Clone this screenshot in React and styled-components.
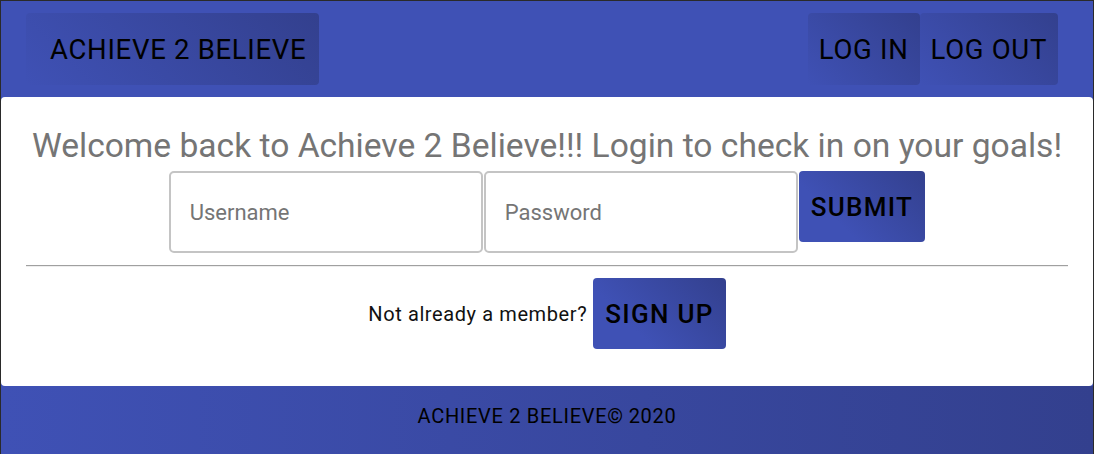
import React from 'react';
import styled, { createGlobalStyle } from 'styled-components';

const GlobalStyle = createGlobalStyle`
  html, body {
    margin: 0;
    padding: 0;
    background: #2a2a2a;
    font-family: Roboto, "Liberation Sans", Arial, sans-serif;
  }
  * { box-sizing: border-box; }
`;

const Page = styled.div`
  width: 1094px;
  height: 454px;
  display: flex;
  flex-direction: column;
  background: #3f51b5;
  border-top: 1px solid #2a2a2a;
  border-left: 1px solid #2a2a2a;
  border-right: 1px solid #2a2a2a;
`;

const Header = styled.header`
  height: 96px;
  display: flex;
  align-items: center;
  justify-content: space-between;
  padding: 0 35px 0 25px;
  background: #3f51b5;
`;

const NavGroup = styled.nav`
  display: flex;
`;

const NavButton = styled.button`
  height: 72px;
  padding: ${p => (p.$brand ? '0 13px 0 24px' : '0 11px')};
  border: none;
  border-radius: 4px;
  background: linear-gradient(45deg, #3f51b5 0%, #33408e 100%);
  color: #000;
  font-family: inherit;
  font-size: 27.5px;
  font-weight: 400;
  letter-spacing: 0.7px;
  text-transform: uppercase;
  cursor: pointer;
`;

const Card = styled.main`
  flex: 1;
  background: #fff;
  border-radius: 4px;
  padding: 28px 25px 36px;
  display: flex;
  flex-direction: column;
  align-items: center;
`;

const Title = styled.h1`
  margin: 0;
  font-size: 33.6px;
  font-weight: 400;
  color: #757575;
  text-align: center;
  line-height: 42px;
  white-space: nowrap;
`;

const Form = styled.form`
  margin-top: 4px;
  display: flex;
  align-items: flex-start;
  gap: 1px;
`;

const Field = styled.input`
  width: 314px;
  height: 82px;
  border: 2px solid #c4c4c4;
  border-radius: 5px;
  padding: 0 19px;
  font-family: inherit;
  font-size: 22px;
  color: #333;
  outline: none;
  &::placeholder {
    color: #757575;
  }
`;

const ActionButton = styled.button`
  height: 71px;
  padding: 0 12px;
  border: none;
  border-radius: 4px;
  background: linear-gradient(45deg, #3f51b5 30%, #33408e 100%);
  color: #000;
  font-family: inherit;
  font-size: 26px;
  font-weight: 500;
  letter-spacing: 1.3px;
  text-transform: uppercase;
  cursor: pointer;
`;

const Divider = styled.hr`
  align-self: stretch;
  margin: 12px 0 11px;
  border: none;
  border-top: 1px solid #a0a0a0;
  border-bottom: 1px solid #eeeeee;
`;

const SignUpRow = styled.div`
  display: flex;
  align-items: center;
  gap: 6px;
`;

const Prompt = styled.span`
  font-size: 20px;
  letter-spacing: 0.6px;
  color: #111;
`;

const Footer = styled.footer`
  height: 68px;
  display: flex;
  align-items: center;
  justify-content: center;
  background: linear-gradient(to right, #3f51b5 0%, #33408e 100%);
  font-size: 20px;
  letter-spacing: 0.7px;
  color: #000;
  padding-bottom: 8px;
`;

const Copy = styled.sup`
  font-size: 20px;
  vertical-align: 5px;
  margin-right: 5px;
`;

export default function App() {
  return (
    <>
      <GlobalStyle />
      <Page>
        <Header>
          <NavButton $brand>Achieve 2 Believe</NavButton>
          <NavGroup>
            <NavButton>Log In</NavButton>
            <NavButton>Log Out</NavButton>
          </NavGroup>
        </Header>
        <Card>
          <Title>Welcome back to Achieve 2 Believe!!! Login to check in on your goals!</Title>
          <Form onSubmit={e => e.preventDefault()}>
            <Field placeholder="Username" />
            <Field placeholder="Password" type="password" />
            <ActionButton type="submit">Submit</ActionButton>
          </Form>
          <Divider />
          <SignUpRow>
            <Prompt>Not already a member?</Prompt>
            <ActionButton type="button">Sign Up</ActionButton>
          </SignUpRow>
        </Card>
        <Footer>
          ACHIEVE 2 BELIEVE<Copy>©</Copy>2020
        </Footer>
      </Page>
    </>
  );
}
